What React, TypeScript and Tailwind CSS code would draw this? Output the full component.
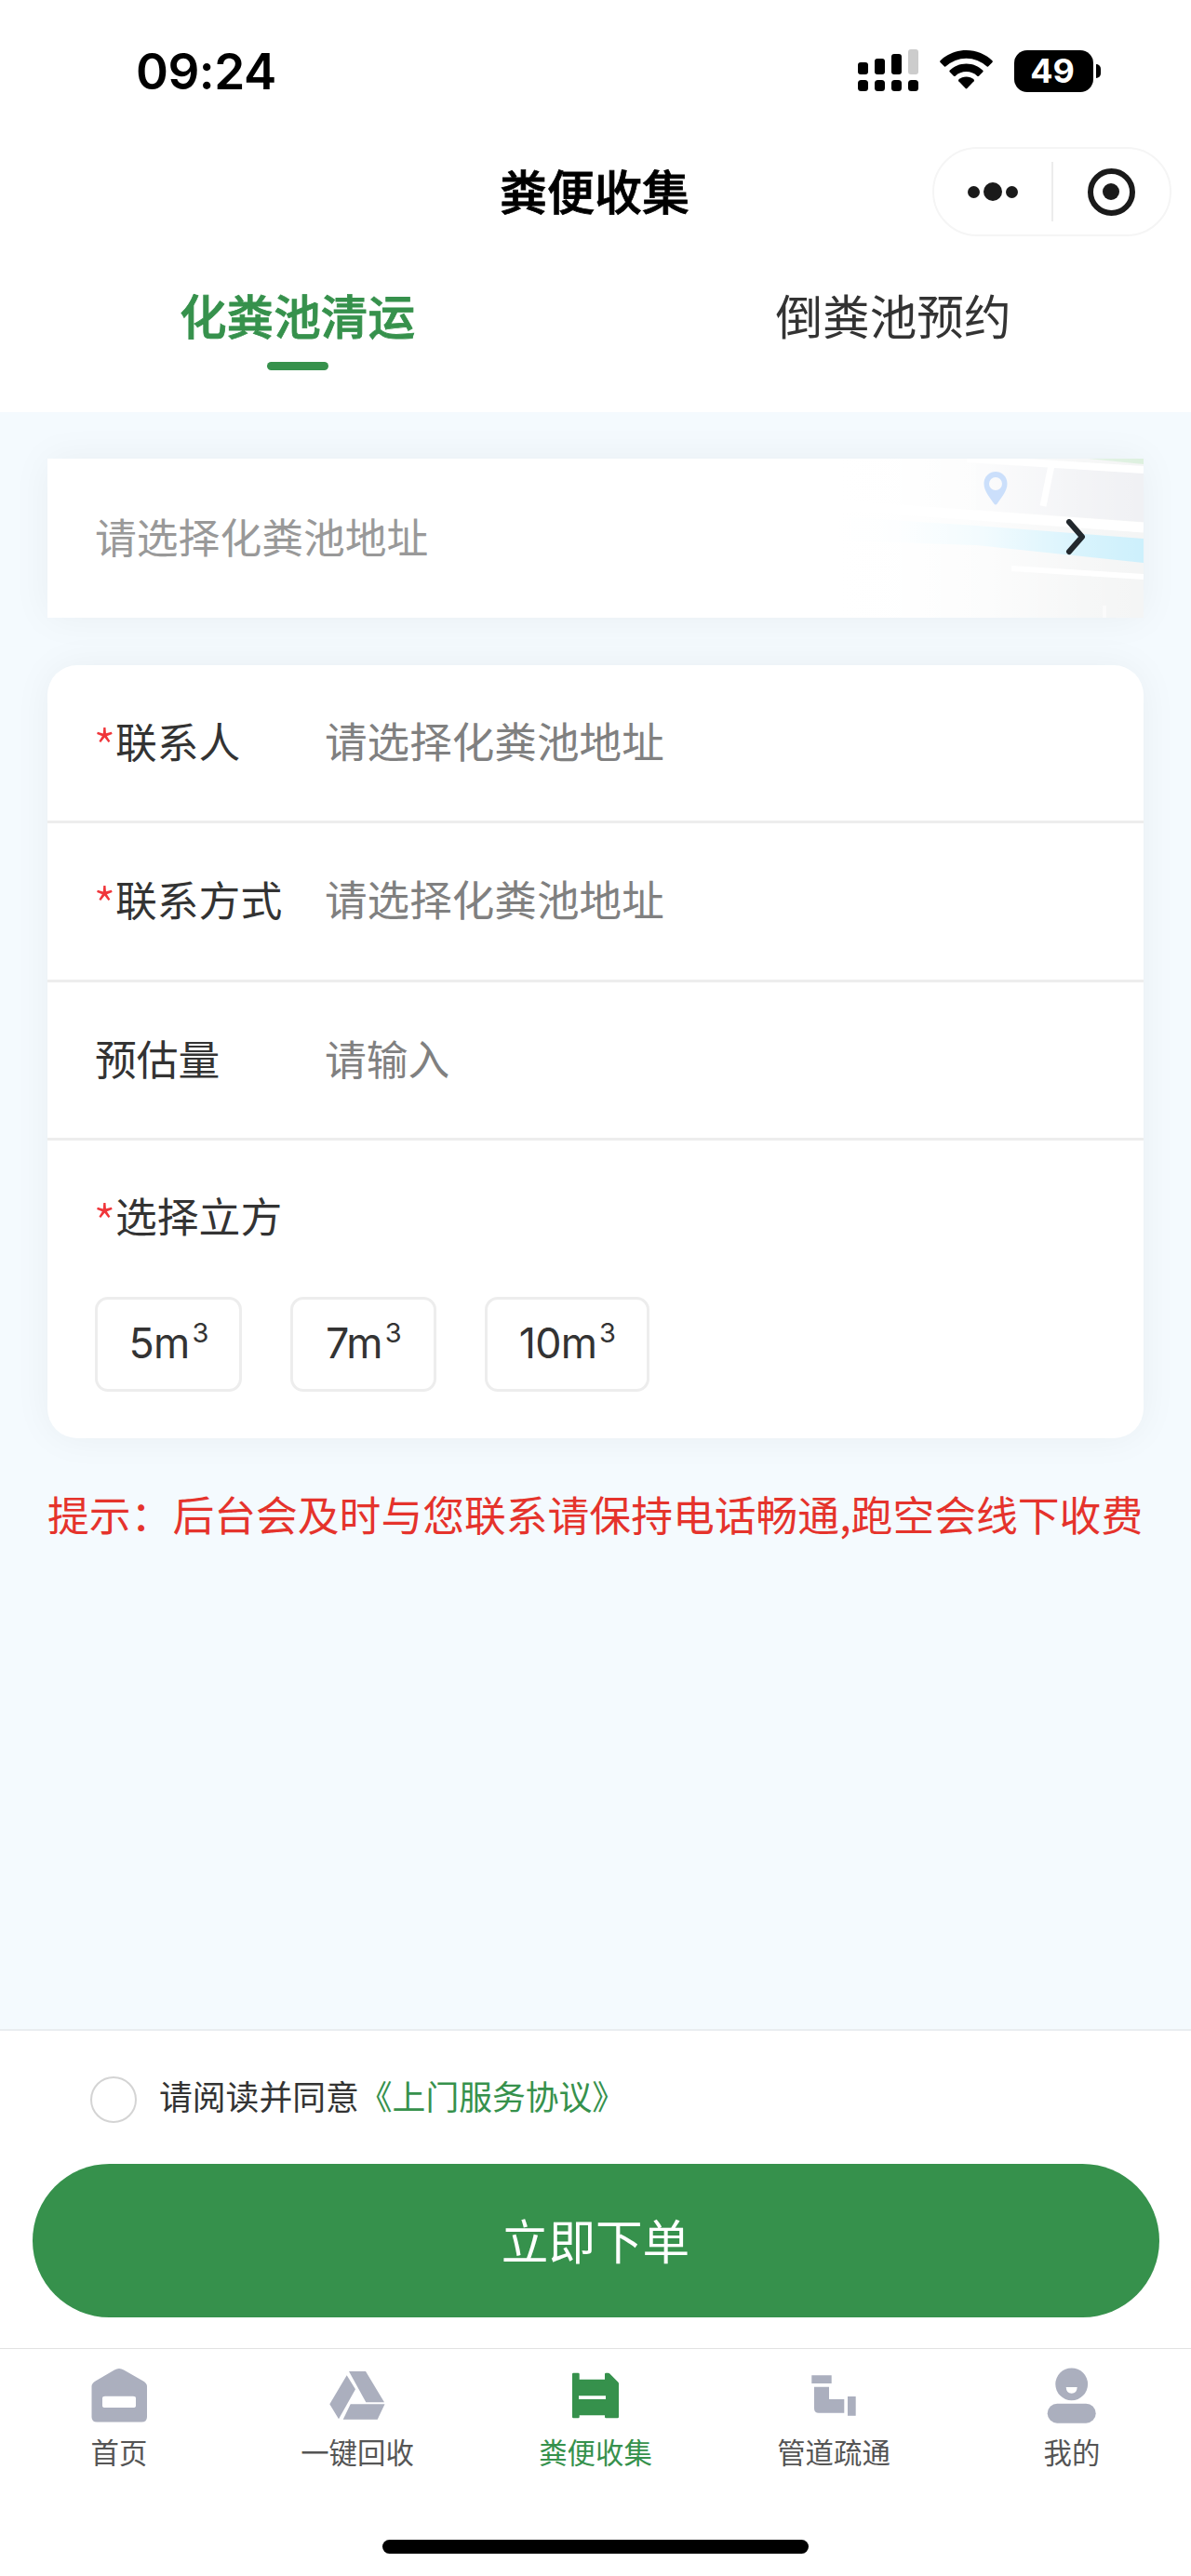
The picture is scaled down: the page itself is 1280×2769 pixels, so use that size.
import type { ReactNode } from 'react';

interface FieldProps {
  label: string;
  placeholder: string;
  required?: boolean;
}

function Star() {
  return <span className="-ml-[2px] mt-[12px] w-[24px] text-[56px] leading-none font-light text-[#f0353a]">*</span>;
}

function Field({ label, placeholder, required }: FieldProps) {
  return (
    <div className="flex h-[170.3px] items-center border-b-3 border-[#ededed] pb-[6px] pl-[51px] text-[44.8px] leading-[67px]">
      <div className="flex h-[67px] w-[247px] shrink-0 text-[#333]">
        {required && <Star />}
        {label}
      </div>
      <span className={required ? 'text-[45.6px] text-[#808080]' : 'text-[44.8px] text-[#808080]'}>{placeholder}</span>
    </div>
  );
}

function StatusBar() {
  return (
    <div className="flex h-[154px] items-start justify-between pl-[146px] pr-[97px] pt-[53px]">
      <span className="mt-px font-[Inter] text-[53px] leading-[46px] font-semibold tracking-[-0.5px] text-black">
        09:24
      </span>
      <div className="flex gap-[23px]">
        <svg width="65" height="46" viewBox="0 0 65 46">
          <rect x="0" y="14" width="11" height="13" rx="3" />
          <rect x="18" y="10" width="11" height="17" rx="3" />
          <rect x="36" y="5" width="11" height="22" rx="3" />
          <rect x="54" y="0" width="11" height="27" rx="3" fill="#ccc" />
          {[0, 18, 36, 54].map((x) => (
            <rect key={x} x={x} y="33" width="11" height="12" rx="3.5" />
          ))}
        </svg>
        <svg width="57" height="46" viewBox="0 0 57 46">
          <path d="M28.5 1C17.7 1 7.5 5.4 0.5 12.2Q-.2 13 .5 14L5 18.4Q5.8 19 6.6 18.3A32 32 0 0 1 50.4 18.3Q51.2 19 52 18.4L56.5 14Q57.2 13 56.5 12.2C49.5 5.4 39.3 1 28.5 1Z" />
          <path d="M28.5 15.5C21.5 15.5 15.2 18.3 10.6 22.7Q10 23.5 10.6 24.3L15 28.7Q15.8 29.4 16.7 28.7A17.5 17.5 0 0 1 40.3 28.7Q41.2 29.4 42 28.7L46.4 24.3Q47 23.5 46.4 22.7C41.8 18.3 35.5 15.5 28.5 15.5Z" />
          <path d="M28.5 29.5C25.3 29.5 22.5 30.7 20.3 32.6Q19.6 33.4 20.3 34.2L27.7 42Q28.5 42.8 29.3 42L36.7 34.2Q37.4 33.4 36.7 32.6C34.5 30.7 31.7 29.5 28.5 29.5Z" />
        </svg>
        <div className="flex items-center gap-[3px]">
          <div className="flex h-[45px] w-[85px] items-center justify-center rounded-[14px] bg-black pr-[3px] font-[Inter] text-[36px] font-bold text-white">
            49
          </div>
          <div className="h-[15px] w-[5px] rounded-r-full bg-black" />
        </div>
      </div>
    </div>
  );
}

function TitleBar() {
  return (
    <div className="relative flex h-[106px] items-center justify-center pr-[2px] pb-[5px]">
      <h1 className="text-[51px] font-medium text-black [-webkit-text-stroke:0.8px]">粪便收集</h1>
      <div className="absolute top-[4px] right-[21px] flex h-[96px] w-[257px] items-center rounded-full border-2 border-[#f5f5f5]">
        <div className="flex flex-1 items-center justify-center gap-[4px]">
          <div className="size-[13px] rounded-full bg-[#1a1a1a]" />
          <div className="size-[20px] rounded-full bg-[#1a1a1a]" />
          <div className="size-[13px] rounded-full bg-[#1a1a1a]" />
        </div>
        <div className="h-[64px] w-[2px] bg-[#ececec]" />
        <div className="flex flex-1 justify-center">
          <div className="flex size-[51px] items-center justify-center rounded-full border-6 border-[#1a1a1a]">
            <div className="size-[18px] rounded-full bg-[#1a1a1a]" />
          </div>
        </div>
      </div>
    </div>
  );
}

// faded map corner of the address card
function MapBackground() {
  return (
    <svg className="absolute top-0 right-0" width="330" height="171" viewBox="0 0 330 171">
      <defs>
        <linearGradient id="fade" x1="0" x2="1">
          <stop offset="0" stopColor="#fff" />
          <stop offset="0.2" stopColor="#fff" stopOpacity="0.96" />
          <stop offset="0.48" stopColor="#fff" stopOpacity="0.74" />
          <stop offset="0.8" stopColor="#fff" stopOpacity="0.22" />
          <stop offset="1" stopColor="#fff" stopOpacity="0" />
        </linearGradient>
      </defs>
      <rect width="330" height="171" fill="#f4f5f5" />
      <path d="M150 0L330 12V68L150 55Z" fill="#f0f1f4" />
      <path d="M270 0H330V6Z" fill="#ddf0df" />
      <path d="M140 0L330 12" stroke="#fff" strokeWidth="8" />
      <path d="M231 7L222 51" stroke="#fff" strokeWidth="7" />
      <path d="M0 50L330 74" stroke="#fff" strokeWidth="11" />
      <path d="M0 62L150 72L330 86V112L150 93L0 88Z" fill="#cdf0fc" />
      <path d="M188 118L330 127" stroke="#fff" strokeWidth="6" />
      <path d="M288 158V171" stroke="#fafafa" strokeWidth="4" />
      <rect width="330" height="171" fill="url(#fade)" />
      <path
        fillRule="evenodd"
        d="M171 14C164 14 158.5 19.5 158.5 27C158.5 35 165 42 169 48Q171 51 173 48C177 42 183.5 35 183.5 27C183.5 19.5 178 14 171 14ZM171 20A7 7 0 1 1 171 34A7 7 0 1 1 171 20Z"
        fill="#cbdffb"
      />
    </svg>
  );
}

const volumes = [
  { value: '5', width: 'w-[158px]' },
  { value: '7', width: 'w-[157px]' },
  { value: '10', width: 'w-[177px]' },
];

const tabs: { name: string; icon: ReactNode; active?: boolean }[] = [
  {
    name: '首页',
    icon: (
      <path
        fillRule="evenodd"
        d="M25 2.5Q30 -.5 35 2.5L56 14.5Q60 17 60 20V53Q60 58.5 54 58.5H6.5Q.5 58.5 .5 53V20Q.5 17 4.5 14.5ZM15 30.7Q12 30.7 12 33V41Q12 43 15 43H45Q48 43 48 41V33Q48 30.7 45 30.7Z"
      />
    ),
  },
  {
    name: '一键回收',
    icon: (
      <path d="M21 4H39L59 37.3H39.3ZM18.7 8.3L28 23.3L10 55.3L.3 39.3ZM22.7 39.3H59.5L51.7 55.7H14.7Z" />
    ),
  },
  {
    name: '粪便收集',
    active: true,
    icon: (
      <path
        fillRule="evenodd"
        d="M5 7Q5 5.7 6.3 5.7H11.4Q12.7 5.7 12.7 7V12.7H40V7Q40 5.7 41.3 5.7H43.5Q44.5 5.7 45.3 6.5L54.2 15.5Q55 16.3 55 17.3V53Q55 54.3 53.7 54.3H41.3Q40 54.3 40 53V51.3H12.7V53Q12.7 54.3 11.4 54.3H6.3Q5 54.3 5 53ZM12 30.3V34H41V30.3Z"
      />
    ),
  },
  {
    name: '管道疏通',
    icon: <path d="M6.3 8.3H27.7V17H6.3ZM9 20.7H25V34H41.3V48.7H14Q9 48.7 9 43.7ZM45 31H53.7V51.7H45Z" />,
  },
  {
    name: '我的',
    icon: (
      <>
        <path
          fillRule="evenodd"
          d="M29.7 .4A17.4 17.4 0 1 1 29.7 35.2A17.4 17.4 0 1 1 29.7 .4ZM23.7 21Q24 27.7 29.7 27.7T35.7 21Z"
        />
        <rect x="3.7" y="38.7" width="52" height="21" rx="10.5" />
      </>
    ),
  },
];

export default function App() {
  return (
    <div className="flex h-[2769px] w-[1280px] flex-col bg-[#f4fafe] font-['Noto_Sans_CJK_SC',sans-serif]">
      <header className="h-[443px] shrink-0 bg-white">
        <StatusBar />
        <TitleBar />
        <div className="flex pt-[40px] text-center text-[50.6px] leading-[76px]">
          <div className="flex flex-1 flex-col items-center text-[#36914c]">
            <span className="mr-[1px] font-medium [-webkit-text-stroke:0.8px]">化粪池清运</span>
            <div className="mt-[13px] h-[9px] w-[66px] rounded-full bg-[#36914c]" />
          </div>
          <div className="flex-1 text-[#333]">倒粪池预约</div>
        </div>
      </header>

      <main className="flex-1 px-[51px] pt-[50px]">
        <div className="relative flex h-[171px] items-center bg-white pb-[5px] pl-[51px] shadow-[0_0_40px_rgba(0,0,0,0.05)]">
          <MapBackground />
          <span className="text-[44.8px] text-[#999]">请选择化粪池地址</span>
          <svg
            className="absolute top-[65px] right-[61px]"
            width="24"
            height="40"
            viewBox="0 0 24 40"
            fill="none"
            stroke="#22282d"
            strokeWidth="6"
            strokeLinecap="round"
            strokeLinejoin="round"
          >
            <path d="M5 3L19 19L5 35" />
          </svg>
        </div>

        <div className="mt-[51px] h-[831px] rounded-[32px] bg-white shadow-[0_0_40px_rgba(0,0,0,0.05)]">
          <Field label="联系人" placeholder="请选择化粪池地址" required />
          <Field label="联系方式" placeholder="请选择化粪池地址" required />
          <Field label="预估量" placeholder="请输入" />
          <div className="px-[51px] pt-[47px] text-[44.8px] text-[#333]">
            <div className="flex h-[66px] leading-[66px]">
              <Star />
              选择立方
            </div>
            <div className="mt-[55px] flex gap-[52px] font-[Inter] tracking-[-0.8px]">
              {volumes.map((v) => (
                <div
                  key={v.value}
                  className={`flex h-[102px] items-center justify-center rounded-[14px] border-3 border-[#ededed] ${v.width}`}
                >
                  {v.value}m<sup className="top-[-0.4em] ml-[3px] text-[29px]">3</sup>
                </div>
              ))}
            </div>
          </div>
        </div>

        <p className="mt-[48px] text-[44.8px] leading-[66px] whitespace-nowrap text-[#e5332c]">
          提示：后台会及时与您联系请保持电话畅通,跑空会线下收费
        </p>
      </main>

      <div className="h-[343px] shrink-0 border-t-2 border-[#e9edf0] bg-white px-[35px] pt-[41px]">
        <div className="flex h-[58px] items-center pl-[62px] text-[35.8px] text-[#333]">
          <div className="mt-[8px] mr-[24px] size-[50px] rounded-full border-2 border-[#d4d4d4]" />
          请阅读并同意<span className="text-[#36914c]">《上门服务协议》</span>
        </div>
        <button className="mt-[44px] flex h-[165px] w-[1211px] items-center justify-center rounded-full bg-[#36914c] pr-px pb-[2px] text-[50.6px] text-white">
          立即下单
        </button>
      </div>

      <nav className="flex h-[245px] shrink-0 flex-col border-t border-[#e2e2e2] bg-white">
        <div className="flex pt-[20px]">
          {tabs.map((tab) => (
            <div
              key={tab.name}
              className={`flex flex-1 flex-col items-center text-[30.4px] ${tab.active ? 'text-[#36914c]' : 'text-[#555]'}`}
            >
              <svg
                width="60"
                height="61"
                viewBox="0 0 60 61"
                className={tab.active ? 'fill-[#36914c]' : 'fill-[#abafbe]'}
              >
                {tab.icon}
              </svg>
              <span className="mt-[6px] leading-[46px]">{tab.name}</span>
            </div>
          ))}
        </div>
        <div className="mx-auto mt-auto mb-[24px] h-[15px] w-[458px] rounded-full bg-black" />
      </nav>
    </div>
  );
}
